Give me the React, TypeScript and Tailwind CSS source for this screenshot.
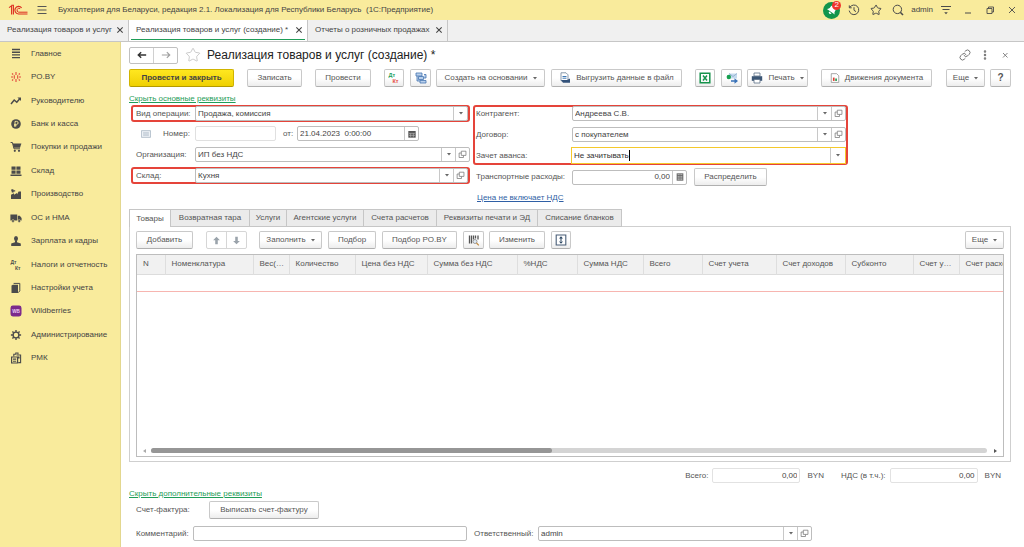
import type { ReactNode } from 'react'
import { Link, MoreVertical, Star } from 'lucide-react'

const ink = '#4b4b4b'

const openTabs = [
  { title: 'Реализация товаров и услуг', width: 'w-[129px]', active: false },
  { title: 'Реализация товаров и услуг (создание) *', width: 'w-[179px]', active: true },
  { title: 'Отчеты о розничных продажах', width: 'w-[140px]', active: false },
]

const columns = [
  { title: 'N', width: 'w-[28px]' },
  { title: 'Номенклатура', width: 'w-[88px]' },
  { title: 'Вес(кг)', width: 'w-[36px]', short: 'Вес(…' },
  { title: 'Количество', width: 'w-[66px]' },
  { title: 'Цена без НДС', width: 'w-[72px]' },
  { title: 'Сумма без НДС', width: 'w-[90px]' },
  { title: '%НДС', width: 'w-[60px]' },
  { title: 'Сумма НДС', width: 'w-[66px]' },
  { title: 'Всего', width: 'w-[59px]' },
  { title: 'Счет учета', width: 'w-[74px]' },
  { title: 'Счет доходов', width: 'w-[69px]' },
  { title: 'Субконто', width: 'w-[68px]' },
  { title: 'Счет учета НДС', width: 'w-[46px]', short: 'Счет у…' },
  { title: 'Счет расходов', width: 'w-[80px]' },
]

const sections = [
  { title: 'Товары', width: 'w-[42px]' },
  { title: 'Возвратная тара', width: 'w-[79px]' },
  { title: 'Услуги', width: 'w-[37px]' },
  { title: 'Агентские услуги', width: 'w-[77px]' },
  { title: 'Счета расчетов', width: 'w-[73px]' },
  { title: 'Реквизиты печати и ЭД', width: 'w-[101px]' },
  { title: 'Списание бланков', width: 'w-[84px]' },
]

function Glyph({ children, className = 'h-3 w-3' }: { children: ReactNode; className?: string }) {
  return (
    <svg viewBox="0 0 12 12" className={`shrink-0 ${className}`} fill="none" aria-hidden="true">
      {children}
    </svg>
  )
}

const menu: { title: string; icon: ReactNode }[] = [
  { title: 'Главное', icon: <path d="M2 1.5h8M2 4.2h8M2 6.9h8M2 9.6h8" stroke={ink} strokeWidth="1.4" /> },
  {
    title: 'PO.BY',
    icon: (
      <path
        d="M6 1v3M6 8v3M4.3 4.3v3.4M7.7 4.3v3.4M1 6h2M9 6h2M2 2.5l1.2 1M9.9 2.5l-1.2 1M2 9.5l1.2-1M9.9 9.5l-1.2-1"
        stroke="#e2483c"
        strokeWidth="1.1"
      />
    ),
  },
  {
    title: 'Руководителю',
    icon: (
      <>
        <path d="M1 9l3.2-4 2.6 2.2L10 3.6" stroke={ink} strokeWidth="1.5" />
        <path d="M7.4 2.4H11V6z" fill={ink} />
      </>
    ),
  },
  {
    title: 'Банк и касса',
    icon: (
      <>
        <circle cx="6" cy="6" r="4.8" fill={ink} />
        <path d="M5 9V3.4h1.6a1.5 1.5 0 010 3H4M4 7.7h2.6" stroke="#f9eb9c" strokeWidth=".9" />
      </>
    ),
  },
  {
    title: 'Покупки и продажи',
    icon: (
      <>
        <path d="M.6 1.5H2.4L4 7.8h6" stroke={ink} strokeWidth="1" />
        <path d="M2.7 2.5H11.4L10 6.8H3.8z" fill={ink} />
        <circle cx="4.8" cy="9.8" r="1.1" fill={ink} />
        <circle cx="9" cy="9.8" r="1.1" fill={ink} />
      </>
    ),
  },
  {
    title: 'Склад',
    icon: <path d="M1.5 1.5h4.1v3.3H1.5zM6.4 1.5h4.1v3.3H6.4zM1.5 5.6h4.1v3.2H1.5zM6.4 5.6h4.1v3.2H6.4zM.5 9.6h11v1.3H.5z" fill={ink} />,
  },
  {
    title: 'Производство',
    icon: <path d="M1 11V6.8l3-1.6v1.6l3-1.7v1.4l1.6-3H11V11zM1.4 1.2h2v1h1.8v1.2H3.6v1.2H1.8V3.2h-.6z" fill={ink} />,
  },
  {
    title: 'ОС и НМА',
    icon: (
      <>
        <path d="M.4 2.5h6.8v6H.4zM7.8 3.8h2l1.8 2.2v2.5H7.8z" fill={ink} />
        <circle cx="3" cy="9" r="1.4" fill={ink} stroke="#f9eb9c" strokeWidth=".5" />
        <circle cx="9.2" cy="9" r="1.4" fill={ink} stroke="#f9eb9c" strokeWidth=".5" />
      </>
    ),
  },
  {
    title: 'Зарплата и кадры',
    icon: (
      <>
        <ellipse cx="6" cy="3.4" rx="2" ry="2.5" fill={ink} />
        <path d="M5 5.4h2v1.8l3.8 1.4V11H1.2V8.6L5 7.2z" fill={ink} />
      </>
    ),
  },
  {
    title: 'Налоги и отчетность',
    icon: (
      <>
        <text x="0.5" y="5" fontSize="5" fontWeight="700" fill={ink}>Дт</text>
        <text x="5" y="10.8" fontSize="5" fontWeight="700" fill={ink}>Кт</text>
      </>
    ),
  },
  {
    title: 'Настройки учета',
    icon: (
      <>
        <path d="M1.5 3.6L3 2.8V11H1.5zM3 2.8h5V11H3z" fill={ink} />
        <path d="M3.6 1.4h6.2v7.4L8.4 10.6" stroke={ink} strokeWidth="1" />
      </>
    ),
  },
  {
    title: 'Wildberries',
    icon: (
      <>
        <rect x=".5" y=".5" width="11" height="11" rx="2.4" fill="#7b2a8c" />
        <text x="6" y="7.7" fontSize="4.6" fontWeight="700" fill="#e9cdf0" textAnchor="middle">WB</text>
      </>
    ),
  },
  {
    title: 'Администрирование',
    icon: (
      <>
        <circle cx="6" cy="6" r="2.9" stroke={ink} strokeWidth="1.4" />
        <path d="M6 .9v2M6 9.1v2M.9 6h2M9.1 6h2M2.4 2.4l1.3 1.3M8.3 8.3l1.3 1.3M9.6 2.4L8.3 3.7M3.7 8.3L2.4 9.6" stroke={ink} strokeWidth="1.4" />
      </>
    ),
  },
  {
    title: 'РМК',
    icon: (
      <>
        <path d="M1.6 5h6v6h-6z" stroke={ink} strokeWidth="1.2" />
        <path d="M3.8 4.4V2.2h2V1H8v1.2M6.6 3h4v7.6H8.2" stroke={ink} strokeWidth="1.1" />
        <path d="M3 6.6h3.2v1.2H3zM3 8.8h3.2v1H3zM7.8 4.4h1.8v2H7.8z" fill={ink} />
      </>
    ),
  },
]

function Caret() {
  return (
    <svg viewBox="0 0 4 3" className="h-[3px] w-1 shrink-0" aria-hidden="true">
      <path d="M0 0h4L2 2.6z" fill="#666" />
    </svg>
  )
}

function OpenIcon() {
  return (
    <Glyph className="h-[9px] w-[9px]">
      <path d="M4.4 1.6h6.2v5.6H4.4z" stroke="#777" />
      <path d="M4.4 4H1.5v6h5.8V7.4" stroke="#777" />
    </Glyph>
  )
}

function Button({ children, className = '', label }: { children: ReactNode; className?: string; label?: string }) {
  return (
    <button
      type="button"
      aria-label={label}
      className={`flex h-[18px] shrink-0 items-center justify-center gap-[5px] rounded-[2px] border border-[#c9c9c9] border-b-[#b0b0b0] bg-linear-to-b from-white from-50% to-[#ededed] whitespace-nowrap ${className}`}
    >
      {children}
    </button>
  )
}

function PickField({ id, value, open = true }: { id: string; value: string; open?: boolean }) {
  return (
    <div className="flex h-[15px] min-w-0 flex-1 rounded-[2px] border border-[#bdbdbd] bg-white">
      <div className="relative flex min-w-0 flex-1">
        <select id={id} className="min-w-0 flex-1 appearance-none bg-transparent pr-4 pl-[2px] text-[#444] outline-none">
          <option>{value}</option>
        </select>
        <span className="pointer-events-none absolute inset-y-0 right-0 flex w-[14px] items-center justify-center border-l border-[#c8c8c8]">
          <Caret />
        </span>
      </div>
      {open && (
        <button type="button" aria-label="Открыть" className="flex w-[14px] items-center justify-center border-l border-[#c8c8c8]">
          <OpenIcon />
        </button>
      )}
    </div>
  )
}

function Total({ id, label }: { id: string; label: string }) {
  return (
    <div className="flex items-center">
      <label htmlFor={id} className="mr-1">{label}</label>
      <input id={id} readOnly defaultValue="0,00" className="h-[15px] w-[88px] rounded-[2px] border border-[#e2e2e2] px-[2px] text-right text-[#444]" />
      <span className="ml-[7px]">BYN</span>
    </div>
  )
}

function TitleBar() {
  return (
    <header className="flex h-5 items-center bg-[#f9eb9c] pr-[6px] pl-2">
      <svg viewBox="0 0 20 12" className="h-3 w-5" fill="none" aria-label="1С">
        <path d="M1 3.6L3.6 1.8V10.4M5.4 10.4V1.2H3.4" stroke="#dd2d20" strokeWidth="1.1" />
        <path d="M13.6 3.8A3.8 3.8 0 1010.4 10H19.5" stroke="#dd2d20" strokeWidth="1.2" />
        <path d="M12.2 4.6a2 2 0 10-1.6 3.6h8.9" stroke="#dd2d20" strokeWidth="1" />
      </svg>
      <button type="button" aria-label="Меню" className="ml-2">
        <Glyph><path d="M1.5 2.5h9M1.5 6h9M1.5 9.5h9" stroke="#555" /></Glyph>
      </button>
      <span className="ml-[10px] whitespace-pre text-[#444]">
        Бухгалтерия для Беларуси, редакция 2.1. Локализация для Республики Беларусь  (1С:Предприятие)
      </span>
      <div className="ml-auto flex items-center gap-[10px]">
        <button type="button" aria-label="Уведомления" className="relative -mr-[2px] flex h-[17px] w-[17px] items-center justify-center rounded-full bg-[#12954c]">
          <Glyph className="h-3 w-3 rotate-[35deg]">
            <path d="M6 1c2.2 0 3 1.6 3 3.4 0 2 .6 2.8 1.8 3.6H1.2C2.4 7.2 3 6.4 3 4.4 3 2.6 3.8 1 6 1zM4.5 9h3a1.5 1.5 0 01-3 0z" fill="white" />
          </Glyph>
          <span className="absolute -top-px -right-px flex h-[9px] w-[9px] items-center justify-center rounded-full bg-[#f0352c] leading-none text-white">2</span>
        </button>
        <button type="button" aria-label="История">
          <Glyph>
            <path d="M1.8 3.4A4.8 4.8 0 111.2 6.6M1.3 1.4v2.4h2.4M6 3.2V6.3l2 1.3" stroke={ink} />
          </Glyph>
        </button>
        <button type="button" aria-label="Избранное"><Star className="h-3 w-3 text-[#4b4b4b]" strokeWidth={2} /></button>
        <button type="button" aria-label="Поиск">
          <Glyph>
            <circle cx="5.4" cy="5.4" r="4.2" stroke={ink} />
            <path d="M8.3 8.3L11 11" stroke={ink} strokeWidth="1.6" />
          </Glyph>
        </button>
        <span className="-mx-[3px] text-[#444]">admin</span>
        <button type="button" aria-label="Сервис">
          <Glyph><path d="M1 2.5h10M2.5 5.5h7" stroke={ink} /><path d="M4.2 8.2h3.6L6 10.2z" fill={ink} /></Glyph>
        </button>
        <button type="button" aria-label="Свернуть"><Glyph><path d="M3 9h6" stroke={ink} /></Glyph></button>
        <button type="button" aria-label="Развернуть">
          <Glyph><path d="M3 4.5h5v5H3zM4.5 4.5V3h5v5H8" stroke={ink} strokeWidth=".9" /></Glyph>
        </button>
        <button type="button" aria-label="Закрыть"><Glyph><path d="M3 3l6 6M9 3L3 9" stroke={ink} strokeWidth=".9" /></Glyph></button>
      </div>
    </header>
  )
}

function OpenTabs() {
  return (
    <nav className="flex h-[22px] border-b border-[#c6c6c6] bg-[#f0f0f0]">
      {openTabs.map((tab) => (
        <div
          key={tab.title}
          className={`shrink-0 border-r border-[#c6c6c6] px-[2px] pb-px whitespace-nowrap ${tab.width} ${tab.active ? 'bg-white' : ''}`}
        >
          <div className={`flex h-full items-center justify-between border-b pr-[2px] pl-[5px] ${tab.active ? 'border-[#1f9d58]' : 'border-transparent'}`}>
            <a href="#" className="text-[#444]">{tab.title}</a>
            <button type="button" aria-label="Закрыть вкладку">
              <Glyph className="h-2 w-2"><path d="M2 2l8 8M10 2l-8 8" stroke="#444" strokeWidth="1.6" /></Glyph>
            </button>
          </div>
        </div>
      ))}
    </nav>
  )
}

function Sidebar() {
  return (
    <aside className="w-[121px] shrink-0 border-r border-[#e3d78f] bg-[#f9eb9c]">
      <ul className="grid h-[328px] auto-rows-fr">
        {menu.map((item) => (
          <li key={item.title}>
            <a href="#" className="flex h-full items-center gap-[9px] pl-[10px] whitespace-nowrap text-[#444]">
              <Glyph>{item.icon}</Glyph>
              {item.title}
            </a>
          </li>
        ))}
      </ul>
    </aside>
  )
}

function Heading() {
  return (
    <div className="flex h-4 items-center">
      <div className="flex h-[17px] w-[49px] rounded-[2px] border border-[#c0c0c0]">
        <button type="button" aria-label="Назад" className="flex flex-1 items-center justify-center">
          <Glyph className="h-[10px] w-[10px]"><path d="M1.5 6H11M5 2.6L1.5 6 5 9.4" stroke="#333" strokeWidth="1.7" /></Glyph>
        </button>
        <button type="button" aria-label="Вперед" className="flex flex-1 items-center justify-center border-l border-[#d0d0d0]">
          <Glyph className="h-[10px] w-[10px]"><path d="M1 6h9.5M7 2.6L10.5 6 7 9.4" stroke="#a0a0a0" strokeWidth="1.4" /></Glyph>
        </button>
      </div>
      <button type="button" aria-label="В избранное" className="ml-[7px]"><Star className="h-4 w-4 text-[#b0b0b0]" strokeWidth={1} /></button>
      <h1 className="ml-[6px] text-xs text-[#222]">Реализация товаров и услуг (создание) *</h1>
      <div className="ml-auto flex items-center gap-2 text-[#777]">
        <button type="button" aria-label="Ссылка"><Link className="h-3 w-3" strokeWidth={2} /></button>
        <button type="button" aria-label="Действия"><MoreVertical className="h-3 w-3" strokeWidth={3} /></button>
        <button type="button" aria-label="Закрыть форму"><Glyph><path d="M4 4l4.5 4.5M8.5 4L4 8.5" stroke="#777" strokeWidth=".9" /></Glyph></button>
      </div>
    </div>
  )
}

function Toolbar() {
  return (
    <div className="mt-[6px] flex items-center">
      <button type="button" className="h-[18px] w-[105px] rounded-[2px] border border-[#d0b400] border-b-[#b39a00] bg-linear-to-b from-[#ffe71f] to-[#efd000] font-bold text-[#444]">
        Провести и закрыть
      </button>
      <Button className="ml-[13px] w-[55px]">Записать</Button>
      <Button className="ml-[13px] w-[56px]">Провести</Button>
      <Button className="ml-[13px] w-5" label="Показать проводки">
        <Glyph>
          <text x="0.5" y="5.4" fontSize="5.5" fontWeight="700" fill="#23a05c">Дт</text>
          <text x="4.5" y="10.8" fontSize="5.5" fontWeight="700" fill="#e5493d">Кт</text>
        </Glyph>
      </Button>
      <Button className="ml-[6px] w-[21px]" label="Структура подчиненности">
        <Glyph>
          <path d="M1 1h6v3H1zM3.5 4.5h5v3h-5zM5 8.5h6V11H5zM2 4v5h3M9 2.5h2V6H9" fill="#b9d0ec" stroke="#4474b0" strokeWidth=".8" />
        </Glyph>
      </Button>
      <Button className="ml-[5px] w-[109px]">Создать на основании <Caret /></Button>
      <Button className="ml-[6px] w-[131px]">
        <Glyph>
          <path d="M2 .8h5l2 2v6H2z" fill="#fff" stroke="#7d8ea3" strokeWidth=".9" />
          <path d="M3.5 4.5h4M3.5 6.2h4" stroke="#3e78b4" />
          <path d="M2 8h6l3-1.5v4.3H4z" fill="#33527a" />
        </Glyph>
        Выгрузить данные в файл
      </Button>
      <Button className="ml-[13px] w-5" label="Excel">
        <Glyph>
          <path d="M1.2 1.2h9.6v9.6H1.2z" stroke="#16934c" strokeWidth="1.5" />
          <path d="M4 3.5l4 5M8 3.5l-4 5" stroke="#16934c" strokeWidth="1.5" />
        </Glyph>
      </Button>
      <Button className="ml-[6px] w-[21px]" label="Отправить">
        <Glyph>
          <path d="M3 1.5h8v5H3z" fill="#c6dbef" />
          <path d="M3 1.5l4 3 4-3" stroke="#89a9c9" strokeWidth=".8" />
          <circle cx="2.8" cy="5" r="2.2" fill="#17a050" />
          <path d="M5 8.2h3.5V6.3L12 9l-3.5 2.7V9.8H5z" fill="#3972b8" />
        </Glyph>
      </Button>
      <Button className="ml-[5px] w-[61px]">
        <Glyph>
          <path d="M3 1h6v3H3z" fill="#fff" stroke="#5b6f87" strokeWidth=".8" />
          <path d="M.8 4.2h10.4v4.6H.8z" fill="#3b5675" />
          <path d="M3 7.5h6V11H3z" fill="#fff" stroke="#5b6f87" strokeWidth=".8" />
        </Glyph>
        Печать <Caret />
      </Button>
      <Button className="ml-[13px] w-[111px]">
        <Glyph className="h-[10px] w-[10px]">
          <path d="M1.5 .8H8l2.5 2.5v8h-9z" fill="#fff" stroke="#8a8a8a" strokeWidth=".9" />
          <path d="M3.5 5.5h2v4h-2z" fill="#e23b30" />
          <path d="M6.3 6.5h2v3h-2z" fill="#2a9c55" />
        </Glyph>
        Движения документа
      </Button>
      <Button className="ml-auto w-[39px]">Еще <Caret /></Button>
      <Button className="ml-[5px] w-[21px] text-[10px] font-bold" label="Справка">?</Button>
    </div>
  )
}

function MainForm() {
  return (
    <div className="flex items-start">
      <div className="ml-[2px] w-[339px]">
        <div className="flex h-[17px] items-center rounded-[3px] border-2 border-[#e5443a] pl-[3px]">
          <label htmlFor="operation" className="w-[59px] shrink-0 whitespace-nowrap">Вид операции:</label>
          <PickField id="operation" value="Продажа, комиссия" open={false} />
        </div>
        <div className="mt-[4px] flex h-[15px] items-center pl-[10px]">
          <Glyph className="h-[10px] w-[10px]">
            <path d="M.5 2h11v8H.5z" fill="#eef2f6" stroke="#a9b7c4" />
            <path d="M2.5 4.5h7M2.5 6h7M2.5 7.5h7" stroke="#a9b7c4" strokeWidth=".8" />
          </Glyph>
          <label htmlFor="number" className="ml-3 w-8 whitespace-nowrap">Номер:</label>
          <input id="number" className="h-[15px] w-[81px] rounded-[2px] border border-[#e0e0e0]" />
          <label htmlFor="date" className="ml-[7px] w-[14px]">от:</label>
          <div className="flex h-[15px] w-[122px] rounded-[2px] border border-[#bdbdbd]">
            <input id="date" defaultValue="21.04.2023  0:00:00" className="min-w-0 flex-1 pl-[2px] text-[#444]" />
            <button type="button" aria-label="Календарь" className="flex w-[14px] items-center justify-center border-l border-[#c8c8c8]">
              <Glyph className="h-2 w-2">
                <path d="M.5 1.5h11v10H.5z" fill="#555" />
                <path d="M1.5 5h9M1.5 8h9M4 5v6M8 5v6" stroke="#ccc" strokeWidth=".8" />
              </Glyph>
            </button>
          </div>
        </div>
        <div className="mt-[6px] flex items-center pl-[5px]">
          <label htmlFor="company" className="w-[59px] shrink-0 whitespace-nowrap">Организация:</label>
          <PickField id="company" value="ИП без НДС" />
        </div>
        <div className="mt-[5px] flex h-[17px] items-center rounded-[3px] border-2 border-[#e5443a] pl-[3px]">
          <label htmlFor="store" className="w-[59px] shrink-0">Склад:</label>
          <PickField id="store" value="Кухня" />
        </div>
      </div>

      <div className="ml-[3px] w-[375px]">
        <div className="flex h-[60px] flex-col gap-[6px] rounded-[3px] border-2 border-[#e5443a] pl-px">
          <div className="-mt-px flex items-center">
            <label htmlFor="partner" className="w-[96px] shrink-0">Контрагент:</label>
            <PickField id="partner" value="Андреева С.В." />
          </div>
          <div className="flex items-center">
            <label htmlFor="contract" className="w-[96px] shrink-0">Договор:</label>
            <PickField id="contract" value="с покупателем" />
          </div>
          <div className="-mt-px flex items-center">
            <label htmlFor="advance" className="w-[95px] shrink-0">Зачет аванса:</label>
            <div className="flex h-[17px] flex-1 items-stretch border border-[#f5c92b] bg-white">
              <div className="flex flex-1 items-center pl-[2px]">
                <input id="advance" defaultValue="Не зачитывать" className="field-sizing-content text-[#333] outline-none" />
                <span className="h-[11px] w-px bg-black" />
              </div>
              <button type="button" aria-label="Выбрать" className="flex w-[15px] items-center justify-center border-l border-[#c8c8c8]"><Caret /></button>
            </div>
          </div>
        </div>
        <div className="mt-[3px] flex items-center pl-[3px]">
          <label htmlFor="transport" className="w-[96px] shrink-0 whitespace-nowrap">Транспортные расходы:</label>
          <div className="flex h-[15px] w-[115px] rounded-[2px] border border-[#bdbdbd]">
            <input id="transport" defaultValue="0,00" className="min-w-0 flex-1 pr-[2px] text-right text-[#444]" />
            <button type="button" aria-label="Калькулятор" className="flex w-[14px] items-center justify-center border-l border-[#c8c8c8]">
              <Glyph className="h-2 w-2">
                <path d="M1 .5h10v11H1z" fill="#666" />
                <path d="M2.5 2.5h7M2.5 5.5h7M2.5 7.5h7M2.5 9.5h7" stroke="#eee" strokeDasharray="1.8 .8" />
              </Glyph>
            </button>
          </div>
          <Button className="ml-[7px] w-[73px]">Распределить</Button>
        </div>
        <a href="#" className="mt-[6px] ml-1 block h-3 w-fit text-[#2f5fa5] underline">Цена не включает НДС</a>
      </div>
    </div>
  )
}

function GoodsPanel() {
  return (
    <section className="mt-[5px] flex flex-1 flex-col">
      <div role="tablist" className="relative z-10 -mb-px flex h-[18px]">
        {sections.map((tab, i) => (
          <button
            key={tab.title}
            type="button"
            role="tab"
            aria-selected={i === 0}
            className={`shrink-0 border-t border-r border-[#c6c6c6] whitespace-nowrap ${tab.width} ${
              i === 0 ? 'border-l bg-white' : 'border-b bg-[#ebebeb]'
            }`}
          >
            {tab.title}
          </button>
        ))}
      </div>
      <div className="flex flex-1 flex-col border border-[#cfcfcf] px-[6px] pt-1 pb-1">
        <div className="flex">
          <Button className="w-[57px]">Добавить</Button>
          <div className="ml-[13px] flex h-[18px] w-[41px] rounded-[2px] border border-[#d6d6d6]">
            <button type="button" aria-label="Вверх" className="flex flex-1 items-center justify-center">
              <Glyph className="h-[9px] w-[9px]"><path d="M6 1l4.5 4.5H7.7V11H4.3V5.5H1.5z" fill="#9aa3ab" /></Glyph>
            </button>
            <button type="button" aria-label="Вниз" className="flex flex-1 items-center justify-center border-l border-[#d6d6d6]">
              <Glyph className="h-[9px] w-[9px]"><path d="M6 11l4.5-4.5H7.7V1H4.3v5.5H1.5z" fill="#9aa3ab" /></Glyph>
            </button>
          </div>
          <Button className="ml-3 w-[63px]">Заполнить <Caret /></Button>
          <Button className="ml-[6px] w-[48px]">Подбор</Button>
          <Button className="ml-[6px] w-[75px]">Подбор PO.BY</Button>
          <Button className="ml-[6px] w-[21px]" label="Поиск по штрихкоду">
            <Glyph>
              <path d="M1.5 1.5v8M3.5 1.5v8M5.5 1.5v4M7.5 1.5v3M10 1.5v4" stroke="#555" strokeWidth="1.3" />
              <circle cx="7" cy="7.5" r="2" fill="#dfeaf5" stroke="#888" strokeWidth=".8" />
              <path d="M8.5 9l2.3 2.3" stroke="#c28a3c" strokeWidth="1.2" />
            </Glyph>
          </Button>
          <Button className="ml-[5px] w-[56px]">Изменить</Button>
          <Button className="ml-[6px] w-5" label="Высота строк">
            <Glyph>
              <path d="M1.2 1h9.6v10H1.2z" fill="#fff" stroke="#4a5f78" strokeWidth="1.1" />
              <path d="M4 4.4L6 2.2l2 2.2zM4 7.6l2 2.2 2-2.2zM5.5 4h1v4h-1z" fill="#27425f" />
            </Glyph>
          </Button>
          <Button className="ml-auto w-[39px]">Еще <Caret /></Button>
        </div>
        <div className="mt-[5px] flex min-h-[203px] flex-1 flex-col border border-[#bdbdbd]">
          <div className="min-w-0 overflow-hidden">
            <div className="w-0">
              <table className="w-[902px] table-fixed border-collapse">
                <thead>
                  <tr className="h-[19px] border-b border-[#dcdcdc] bg-[#f1f1f1]">
                    {columns.map((col) => (
                      <th
                        key={col.title}
                        title={col.title}
                        className={`border-r border-[#dedede] pl-[6px] text-left font-normal whitespace-nowrap ${col.width}`}
                      >
                        {col.short ?? col.title}
                      </th>
                    ))}
                  </tr>
                </thead>
                <tbody>
                  <tr className="h-[17px] border-b border-[#f7b5b0]">
                    {columns.map((col) => <td key={col.title} />)}
                  </tr>
                </tbody>
              </table>
            </div>
          </div>
          <div className="mt-auto mb-[3px] flex h-[5px] items-center px-[6px]">
            <span className="w-2"><svg viewBox="0 0 3 4" className="h-1 w-[3px]"><path d="M3 0v4L0 2z" fill="#aaa" /></svg></span>
            <div className="h-[5px] flex-1 rounded-full bg-[#d4d4d4]">
              <div className="h-full w-[48%] rounded-full bg-[#969696]" />
            </div>
            <span className="flex w-[10px] justify-end"><svg viewBox="0 0 3 4" className="h-1 w-[3px]"><path d="M0 0v4l3-2z" fill="#555" /></svg></span>
          </div>
        </div>
      </div>
    </section>
  )
}

function Footer() {
  return (
    <footer className="pb-[6px]">
      <div className="mt-[6px] flex justify-end gap-[17px] pr-[10px]">
        <Total id="total" label="Всего:" />
        <Total id="vat" label="НДС (в т.ч.):" />
      </div>
      <a href="#" className="mt-[5px] block h-3 w-fit text-[#1f9d58] underline">Скрыть дополнительные реквизиты</a>
      <div className="mt-px flex items-center pl-[7px]">
        <span className="w-[73px]">Счет-фактура:</span>
        <Button className="w-[110px]">Выписать счет-фактуру</Button>
      </div>
      <div className="mt-[7px] flex items-center pl-[7px]">
        <label htmlFor="comment" className="w-[57px] shrink-0">Комментарий:</label>
        <input id="comment" className="h-[15px] w-[274px] rounded-[2px] border border-[#bdbdbd]" />
        <label htmlFor="manager" className="ml-[7px] w-16 shrink-0 whitespace-nowrap">Ответственный:</label>
        <div className="flex w-[274px]"><PickField id="manager" value="admin" /></div>
      </div>
    </footer>
  )
}

export default function App() {
  return (
    <div className="flex min-h-screen flex-col bg-white font-['Liberation_Sans',Arial,sans-serif] text-[8px] leading-3 text-[#555]">
      <TitleBar />
      <OpenTabs />
      <div className="flex flex-1">
        <Sidebar />
        <main className="flex min-w-0 flex-1 flex-col pt-[5px] pr-[13px] pl-2">
          <Heading />
          <Toolbar />
          <a href="#" className="mt-[6px] block h-3 w-fit text-[#1f9d58] underline">Скрыть основные реквизиты</a>
          <MainForm />
          <GoodsPanel />
          <Footer />
        </main>
      </div>
    </div>
  )
}
